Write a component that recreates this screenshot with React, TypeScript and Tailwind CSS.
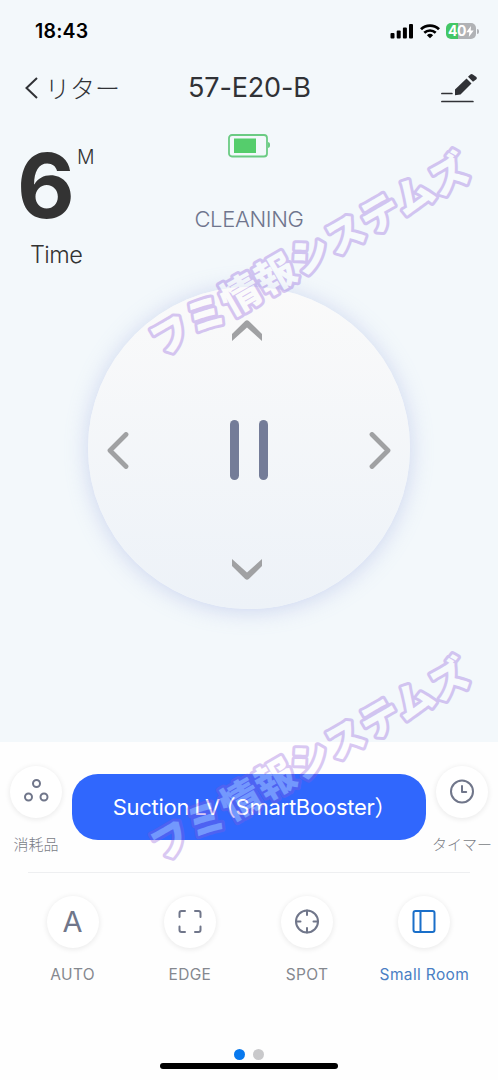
import React from 'react';

interface RoundButtonProps {
  label: string;
  active?: boolean;
  children: React.ReactNode;
}

const ICON_PROPS = {
  fill: 'none',
  stroke: 'currentColor',
  strokeWidth: 2,
  strokeLinecap: 'round' as const,
  strokeLinejoin: 'round' as const,
};

const RoundButton: React.FC<RoundButtonProps> = ({ label, active, children }) => (
  <button
    className={`flex flex-col items-center ${active ? 'text-[#1a6fc9]' : 'text-[#70768a]'}`}
    aria-label={label}
  >
    <span className="flex h-[52px] w-[52px] items-center justify-center rounded-full bg-white shadow-[0_1px_5px_1px_rgba(0,0,0,0.07)]">
      {children}
    </span>
    <span
      className={`mt-[17px] h-5 whitespace-nowrap text-[15.5px] font-[370] leading-5 tracking-[0.35px] ${active ? 'text-[#4a7fc4]' : 'text-[#85888f]'}`}
    >
      {label}
    </span>
  </button>
);

const SideButton: React.FC<RoundButtonProps> = ({ label, children }) => (
  <button className="flex w-[72px] flex-col items-center text-[#70768a]" aria-label={label}>
    <span className="flex h-[52px] w-[52px] items-center justify-center rounded-full bg-white shadow-[0_1px_5px_1px_rgba(0,0,0,0.07)]">
      {children}
    </span>
    <span className="mt-4 h-5 whitespace-nowrap font-['Noto_Sans_CJK_JP',sans-serif] text-[15px] font-light leading-5 text-[#7a7d86]">
      {label}
    </span>
  </button>
);

const StatusBar = () => (
  <div className="flex h-[60px] items-center justify-between pl-[35px] pr-[19px] pt-0.5 text-black">
    <span className="text-[19.5px] font-semibold leading-6 tracking-[0.2px]">18:43</span>
    <div className="flex items-center">
      <svg width="24" height="16" viewBox="0 0 24 16" fill="currentColor">
        <rect x="0.5" y="10" width="4" height="5.5" rx="1" />
        <rect x="6.7" y="7.5" width="4" height="8" rx="1" />
        <rect x="12.9" y="4.5" width="4" height="11" rx="1" />
        <rect x="19" y="1" width="4" height="14.5" rx="1" />
      </svg>
      <svg className="ml-1.5" width="20" height="15" viewBox="0 0 20 15" fill="none" stroke="currentColor">
        <path d="M1 5.3a13 13 0 0 1 18 0" strokeWidth="2.8" />
        <path d="M4.3 8.8a8.2 8.2 0 0 1 11.4 0" strokeWidth="2.6" />
        <path d="M10 14.2 6.9 11.2a4.6 4.6 0 0 1 6.2 0z" fill="currentColor" stroke="none" />
      </svg>
      <div className="ml-1.5 flex h-4 w-[30px] items-center justify-center rounded-[5px] bg-linear-to-r from-[#43c766] from-40% to-[#b0b2b5] to-40% text-white">
        <span className="text-[14px] font-bold leading-4 tracking-tight">40</span>
        <svg width="8" height="11" viewBox="0 0 8 11" fill="currentColor">
          <path d="M5 0 0.3 6.2h3L2.8 11 7.7 4.6h-3z" />
        </svg>
      </div>
      <span className="ml-px h-[5px] w-[2px] rounded-r-full bg-[#b0b2b5]" />
    </div>
  </div>
);

const Header = () => (
  <div className="grid h-[56px] grid-cols-[188px_1fr_57px] items-center text-[#303236]">
    <button className="flex items-center pl-6" aria-label="リター">
      <svg width="14" height="22" viewBox="0 0 14 22" {...ICON_PROPS} strokeLinecap="butt" strokeLinejoin="miter">
        <path d="M13 1 2.5 11 13 21" />
      </svg>
      <span className="ml-[7px] -mt-[3px] font-['Noto_Sans_CJK_JP',sans-serif] text-[25px] font-light leading-8">リター</span>
    </button>
    <h1 className="whitespace-nowrap text-[27px] font-[370] leading-8 tracking-[-0.15px]">57-E20-B</h1>
    <svg className="-mt-0.5" width="38" height="32" viewBox="0 0 38 32" fill="currentColor">
      <path d="m14 18.5 11.5-11 5 5L19.5 23.5 14 24.3z" />
      <path d="m27 5.7 2.4-2.3q1.2-1 2.4 0l3.600 2.500q1 1.2 0 2.4L32 10.8z" />
      <path d="M0.9 22.5h10M0.9 30.5h31" fill="none" stroke="currentColor" strokeWidth="1.7" strokeLinecap="round" />
    </svg>
  </div>
);

const CleaningInfo = () => (
  <div className="grid h-[171px] grid-cols-[188px_1fr_188px] text-[#333]">
    <div className="pl-[17px]">
      <div className="flex h-[124px] items-start">
        <span className="mt-[22px] w-[60px] text-[89px] font-bold leading-[96px]">6</span>
        <span className="mt-[29px] text-[19.5px] font-light leading-6">M</span>
      </div>
      <p className="pl-[13px] text-[23.5px] font-[350] leading-[30px] tracking-[-0.6px]">Time</p>
    </div>
    <div className="flex flex-col items-center pt-[18px]">
      <svg width="43" height="25" viewBox="0 0 43 25" fill="none">
        <rect x="1" y="1" width="38" height="21.5" rx="3" stroke="#6bcb83" strokeWidth="1.8" />
        <path d="M40 8q2 .3 2 2v2q0 1.700-2 2z" fill="#6bcb83" />
        <rect x="6" y="4.5" width="22" height="14.5" fill="#55cd6c" />
      </svg>
      <p className="mt-[44px] text-[22px] font-light leading-8 tracking-[-0.35px] text-[#6f758d]">CLEANING</p>
    </div>
  </div>
);

const Dial = () => (
  <div className="ml-[88px] grid h-[322px] w-[322px] grid-cols-[60px_1fr_60px] grid-rows-[86px_1fr_82px] place-items-center rounded-full bg-linear-to-b from-[#fafafa] to-[#edf2f8] shadow-[0_2px_22px_rgba(150,165,225,0.42)]">
    <svg className="col-start-2 -ml-[4px]" width="30" height="21" viewBox="0 0 30 21" fill="#a0a1a3">
      <path d="M0 14 13.2 1q1.800-1.300 3.600 0L30 14V21L15 7.500 0 21z" />
    </svg>
    <svg className="col-start-1 row-start-2" width="22" height="37" viewBox="0 0 22 37" fill="none" stroke="#a0a1a3" strokeWidth="4.8" strokeLinecap="round" strokeLinejoin="round">
      <path d="M19 2.5 3 18.5l16 16" />
    </svg>
    <button className="col-start-2 row-start-2 flex gap-[20px]" aria-label="Pause">
      <span className="h-[60px] w-[9px] rounded-full bg-[#747c98]" />
      <span className="h-[60px] w-[9px] rounded-full bg-[#747c98]" />
    </button>
    <svg className="col-start-3 row-start-2" width="22" height="37" viewBox="0 0 22 37" fill="none" stroke="#a0a1a3" strokeWidth="4.8" strokeLinecap="round" strokeLinejoin="round">
      <path d="m3 2.5 16 16-16 16" />
    </svg>
    <svg className="col-start-2 row-start-3 mt-0.5 -ml-[4px]" width="30" height="21" viewBox="0 0 30 21" fill="#a0a1a3">
      <path d="M0 7 13.2 20q1.800 1.300 3.600 0L30 7V0L15 13.500 0 0z" />
    </svg>
  </div>
);

// Diagonal overlay label, lies over the controls
const Watermark = ({ className }: { className: string }) => (
  <svg className={`pointer-events-none absolute left-0 opacity-[0.32] ${className}`} width="498" height="240" viewBox="0 0 498 240">
    <text
      x="161"
      y="222"
      transform="rotate(-30 161 222)"
      textLength="360"
      fill="#fff"
      stroke="#8c58dc"
      strokeWidth="6"
      strokeLinejoin="round"
      paintOrder="stroke"
      className="font-['Noto_Sans_CJK_JP',sans-serif] text-[39px] font-black"
    >
      フミ情報システムズ
    </text>
  </svg>
);

const Controls = () => (
  <div className="flex h-[338px] flex-col bg-[#fefefe]">
    <div className="flex h-[130px] items-start justify-between pt-6">
      <SideButton label="消耗品">
        <svg width="26" height="26" viewBox="0 0 26 26" {...ICON_PROPS}>
          <circle cx="13.5" cy="4.5" r="3.5" />
          <circle cx="5.5" cy="18" r="3.5" />
          <circle cx="21" cy="18" r="3.5" />
        </svg>
      </SideButton>
      <button className="mt-2 h-[66px] w-[354px] whitespace-nowrap rounded-[26px] bg-[#3067fd] text-[22px] font-[370] tracking-[-0.25px] text-white [font-feature-settings:'halt'] [word-spacing:-1px]">
        Suction LV （SmartBooster）
      </button>
      <SideButton label="タイマー">
        <svg width="26" height="26" viewBox="0 0 26 26" {...ICON_PROPS}>
          <circle cx="13" cy="12.5" r="11" />
          <path d="M13 7V13h4.200" />
        </svg>
      </SideButton>
    </div>
    <div className="mx-7 h-px bg-[#eeeff1]" />
    <div className="ml-[14px] mr-[15px] grid grid-cols-4 pt-[23px]">
      <RoundButton label="AUTO">
        <span className="text-[29px] font-normal leading-7">A</span>
      </RoundButton>
      <RoundButton label="EDGE">
        <svg width="26" height="26" viewBox="0 0 26 26" {...ICON_PROPS}>
          <path d="M2.5 8V4q0-2 2-2H8M18 2h3.500q2 0 2 2V8M23.500 17.500v3.500q0 2-2 2H18M8 23H4.500q-2 0-2-2V17.500" />
        </svg>
      </RoundButton>
      <RoundButton label="SPOT">
        <svg width="26" height="26" viewBox="0 0 26 26" {...ICON_PROPS}>
          <circle cx="13" cy="12.5" r="11" />
          <path d="M13 1.500v4.500M13 19V23.500M2 12.500h4.500M19.500 12.500H24" />
        </svg>
      </RoundButton>
      <RoundButton label="Small Room" active>
        <svg width="26" height="26" viewBox="0 0 26 26" {...ICON_PROPS}>
          <rect x="2.5" y="2" width="21" height="21" rx="2" />
          <path d="M9.500 2v21" />
        </svg>
      </RoundButton>
    </div>
    <div className="mt-auto flex flex-col items-center pb-[11px]">
      <div className="flex gap-2">
        <span className="h-[11px] w-[11px] rounded-full bg-[#0879ee]" />
        <span className="h-[11px] w-[11px] rounded-full bg-[#c9c9cb]" />
      </div>
      <div className="mt-[3px] h-1.5 w-[178px] rounded-full bg-black" />
    </div>
  </div>
);

export default function App() {
  return (
    <div className="relative h-[1080px] w-[498px] overflow-hidden bg-[#f3f8fb] font-['Inter','Noto_Sans_CJK_JP',sans-serif]">
      <div className="h-[742px]">
        <StatusBar />
        <Header />
        <CleaningInfo />
        <Dial />
      </div>
      <Controls />
      <Watermark className="top-[135px]" />
      <Watermark className="top-[640px]" />
    </div>
  );
}
